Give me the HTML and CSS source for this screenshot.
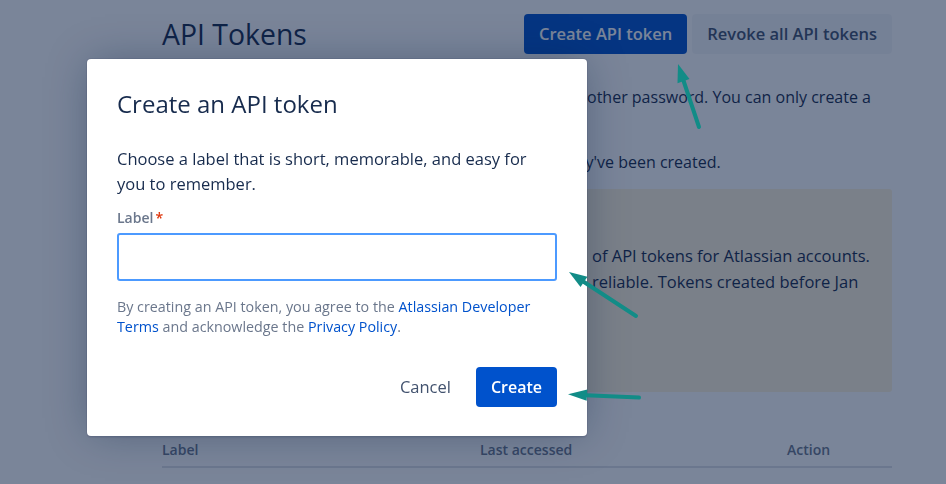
FILE: index.html
```html
<!DOCTYPE html>
<html lang="en">
<head>
<meta charset="utf-8">
<title>API Tokens</title>
<link rel="stylesheet" href="styles.css">
</head>
<body>
<main class="page">
  <header class="page-header">
    <h1 class="page-title">API Tokens</h1>
    <div class="header-actions">
      <button class="btn btn-primary" type="button">Create API token</button>
      <button class="btn btn-default" type="button">Revoke all API tokens</button>
    </div>
  </header>
  <p class="intro">other password. You can only create a</p>
  <p class="intro intro-second">they've been created.</p>
  <section class="notice">
    <p class="notice-text">of API tokens for Atlassian accounts.<br>reliable. Tokens created before Jan</p>
  </section>
  <div class="token-table">
    <div class="token-head">
      <span>Label</span>
      <span>Last accessed</span>
      <span>Action</span>
    </div>
  </div>
</main>

<div class="overlay"></div>

<div class="modal" role="dialog" aria-labelledby="modal-title">
  <h2 class="modal-title" id="modal-title">Create an API token</h2>
  <p class="modal-text">Choose a label that is short, memorable, and easy for<br>you to remember.</p>
  <label class="field-label" for="token-label">Label<span class="required">*</span></label>
  <input class="field-input" id="token-label" type="text">
  <p class="terms">By creating an API token, you agree to the <a href="#">Atlassian Developer<br>Terms</a> and acknowledge the <a href="#">Privacy Policy</a>.</p>
  <div class="modal-footer">
    <button class="btn btn-subtle" type="button">Cancel</button>
    <button class="btn btn-blue" type="button">Create</button>
  </div>
</div>

<svg class="annotations" width="946" height="484" viewBox="0 0 946 484" aria-hidden="true">
  <g fill="#128c87" stroke="#128c87">
    <line x1="683.6" y1="81" x2="699" y2="127" stroke-width="4" stroke-linecap="round"/>
    <polygon points="678,64 689.5,79 677.5,83.2" stroke="none"/>
    <line x1="584" y1="282" x2="636" y2="316" stroke-width="4" stroke-linecap="round"/>
    <polygon points="569,272 587.5,276.8 580.5,287" stroke="none"/>
    <line x1="586" y1="395.2" x2="639" y2="397.6" stroke-width="4" stroke-linecap="round"/>
    <polygon points="568,394.3 587.3,389.5 586.7,400.8" stroke="none"/>
  </g>
</svg>
</body>
</html>
```

FILE: styles.css
```css
* {
  box-sizing: border-box;
}

html,
body {
  margin: 0;
  padding: 0;
}

body {
  width: 946px;
  height: 484px;
  overflow: hidden;
  position: relative;
  background: #ffffff;
  font-family: "Open Sans", "Noto Sans", sans-serif;
  color: #172b4d;
}

.page {
  width: 730px;
  margin-left: 162px;
  padding-top: 14px;
}

.page-header {
  display: flex;
  align-items: center;
  justify-content: space-between;
  height: 40px;
}

.page-title {
  margin: 0;
  font-size: 28.4px;
  font-weight: 500;
  line-height: 40px;
  color: #172b4d;
}

.header-actions {
  display: flex;
  gap: 5px;
}

.btn {
  height: 40px;
  padding: 0 15px;
  border: 0;
  border-radius: 4px;
  font-family: inherit;
  font-size: 16.5px;
  font-weight: 600;
  line-height: 40px;
  white-space: nowrap;
  cursor: pointer;
}

.btn-primary,
.btn-blue {
  background: #0052cc;
  color: #ffffff;
}

.btn-blue {
  font-size: 16px;
}

.btn-default {
  background: rgba(9, 30, 66, 0.04);
  color: #42526e;
}

.btn-subtle {
  background: transparent;
  color: #42526e;
  font-weight: 500;
}

.intro {
  margin: 31px 0 0;
  padding-left: 425px;
  font-size: 16px;
  line-height: 25px;
  white-space: nowrap;
}

.intro-second {
  margin-top: 40px;
  padding-left: 399px;
}

.notice {
  margin-top: 14px;
  height: 203px;
  padding: 54px 20px 20px 430px;
  background: #fff4dc;
  border-radius: 3px;
}

.notice-text {
  margin: 0;
  font-size: 16.5px;
  line-height: 26px;
  white-space: nowrap;
}

.token-table {
  margin-top: 48px;
}

.token-head {
  display: grid;
  grid-template-columns: 318px 307px 1fr;
  padding-bottom: 6px;
  border-bottom: 2px solid #dfe1e6;
  font-size: 14px;
  font-weight: 600;
  line-height: 20px;
  color: #6b778c;
}

.overlay {
  position: fixed;
  inset: 0;
  background: rgba(9, 30, 66, 0.54);
}

.modal {
  position: absolute;
  left: 87px;
  top: 59px;
  width: 500px;
  height: 377px;
  padding: 30px 30px 29px;
  display: flex;
  flex-direction: column;
  background: #ffffff;
  border-radius: 4px;
  box-shadow: 0 0 0 1px rgba(9, 30, 66, 0.08), 0 2px 1px rgba(9, 30, 66, 0.08), 0 0 40px -4px rgba(9, 30, 66, 0.35);
}

.modal-title {
  margin: 0;
  font-size: 24px;
  font-weight: 500;
  line-height: 30px;
  color: #172b4d;
}

.modal-text {
  margin: 27px 0 0;
  font-size: 16.5px;
  line-height: 25px;
}

.field-label {
  margin-top: 12px;
  font-size: 14px;
  font-weight: 600;
  line-height: 20px;
  color: #6b778c;
}

.required {
  margin-left: 2px;
  color: #de350b;
}

.field-input {
  margin-top: 5px;
  height: 48px;
  width: 100%;
  border: 2px solid #4c9aff;
  border-radius: 3px;
  outline: none;
  font-family: inherit;
  font-size: 16px;
  padding: 0 8px;
}

.terms {
  margin: 16px 0 0;
  font-size: 14.3px;
  line-height: 20px;
  color: #6b778c;
}

.terms a {
  color: #0052cc;
  text-decoration: none;
}

.modal-footer {
  margin-top: 30px;
  display: flex;
  justify-content: flex-end;
  gap: 10px;
}

.annotations {
  position: absolute;
  left: 0;
  top: 0;
  pointer-events: none;
}
```
